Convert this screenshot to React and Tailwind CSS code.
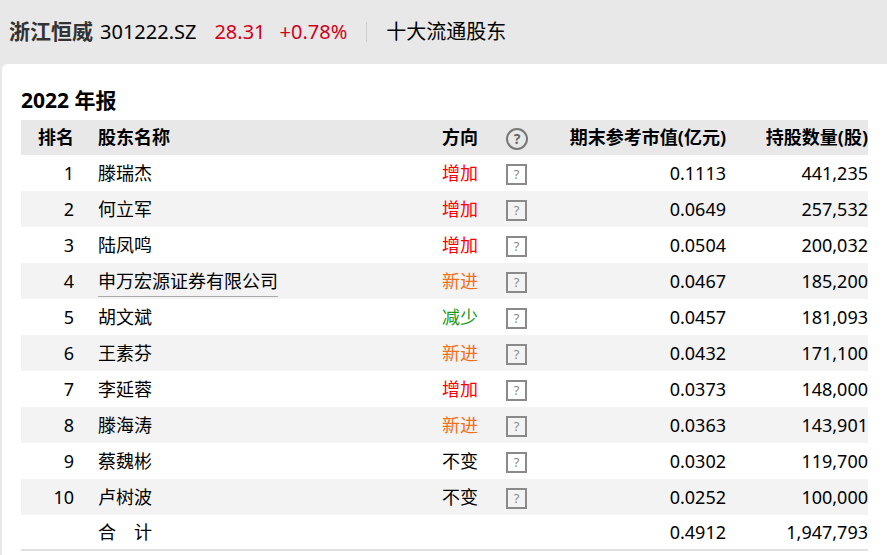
const rows=[
[1,'滕瑞杰','增加','0.1113','441,235'],
[2,'何立军','增加','0.0649','257,532'],
[3,'陆凤鸣','增加','0.0504','200,032'],
[4,'申万宏源证券有限公司','新进','0.0467','185,200'],
[5,'胡文斌','减少','0.0457','181,093'],
[6,'王素芬','新进','0.0432','171,100'],
[7,'李延蓉','增加','0.0373','148,000'],
[8,'滕海涛','新进','0.0363','143,901'],
[9,'蔡魏彬','不变','0.0302','119,700'],
[10,'卢树波','不变','0.0252','100,000'],
];
const col={'增加':'text-[#ff0000]','新进':'text-[#f07020]','减少':'text-[#199a19]','不变':'text-black'};
const Q=()=>(<span className="inline-flex w-[21px] h-[21px] border-2 border-[#8a8a8a] items-center justify-center text-[13px] text-[#888] leading-none">?</span>);
export default function App(){
return(<div className="w-[887px] h-[555px] bg-[#e8e8e8] overflow-hidden text-black" style={{fontFamily:'"Noto Sans","Noto Sans CJK SC",sans-serif'}}>
<div className="h-[64px] flex items-center pl-[9px] text-[20px] whitespace-nowrap">
<span className="font-bold text-[#333] text-[21px]">浙江恒威</span>
<span className="ml-[7px]">301222.SZ</span>
<span className="ml-[18px] text-[#d0021b]">28.31</span>
<span className="ml-[14px] text-[#d0021b]">+0.78%</span>
<span className="ml-[19px] w-px h-[20px] bg-[#ccc]"></span>
<span className="ml-[19px]">十大流通股东</span>
</div>
<div className="ml-[2px] bg-white rounded-tl-[6px] h-[491px] pt-[22px] pl-[19px]">
<div className="font-bold text-[21px] leading-[28px] h-[34px]">2022 年报</div>
<div className="w-[847px] text-[18px] whitespace-nowrap">
<div className="flex items-center h-[35px] bg-[#e8e8e8] font-bold">
<div className="w-[53px] text-right">排名</div>
<div className="ml-[24px] w-[344px]">股东名称</div>
<div className="w-[64px]">方向</div>
<div className="w-[40px]"><span className="inline-flex w-[22px] h-[22px] rounded-full border-2 border-[#777] items-center justify-center text-[14px] text-[#666] font-bold">?</span></div>
<div className="w-[180px] flex justify-end">期末参考市值(亿元)</div>
<div className="flex-1 text-right">持股数量(股)</div>
</div>
{rows.map((r,i)=>(<div key={i} className={`flex items-center h-[36px] ${i%2?'bg-[#f3f3f3]':'bg-white'}`}>
<div className="w-[53px] text-right">{r[0]}</div>
<div className="ml-[24px] w-[344px]"><span className={r[0]===4?'border-b border-[#aaa] pb-[3px]':''}>{r[1]}</span></div>
<div className={`w-[64px] ${col[r[2]]}`}>{r[2]}</div>
<div className="w-[40px] flex pt-[3px]"><Q/></div>
<div className="w-[180px] text-right">{r[3]}</div>
<div className="flex-1 text-right">{r[4]}</div>
</div>))}
<div className="flex items-center h-[36px] border-b-2 border-[#e0e0e0]">
<div className="w-[53px]"></div>
<div className="ml-[24px] w-[448px]">合　计</div>
<div className="w-[180px] text-right">0.4912</div>
<div className="flex-1 text-right">1,947,793</div>
</div>
</div>
</div>
</div>);
}
